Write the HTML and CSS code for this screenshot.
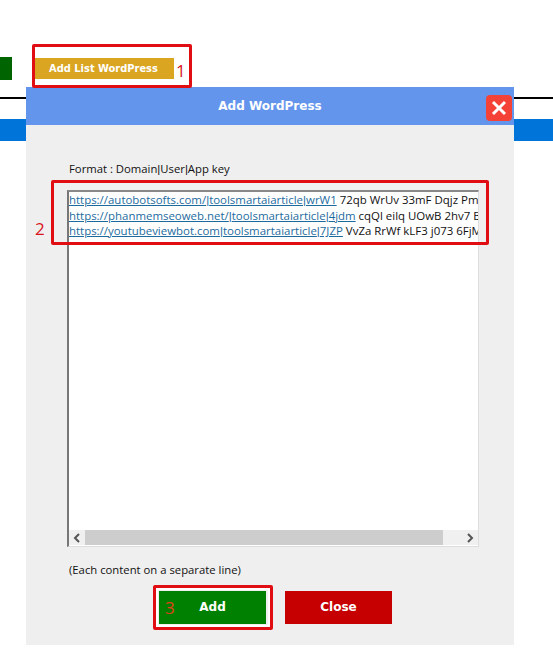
FILE: index.html
```html
<!DOCTYPE html>
<html lang="en">
<head>
<meta charset="utf-8">
<title>Add WordPress</title>
<link rel="stylesheet" href="styles.css">
</head>
<body>
<div class="page">
  <div class="toolbar">
    <span class="green-chip"></span>
    <button class="gold-btn">Add List WordPress</button>
  </div>
  <div class="rule"></div>
  <div class="blue-bar"></div>

  <div class="modal">
    <div class="modal-head">
      <span class="modal-title">Add WordPress</span>
      <span class="close-x">
        <svg width="16" height="16" viewBox="0 0 16 16"><path d="M2 2 L14 14 M14 2 L2 14" stroke="#fff" stroke-width="3" fill="none"/></svg>
      </span>
    </div>
    <div class="modal-body">
      <div class="format">Format : Domain<span class="pipe">|</span>User<span class="pipe">|</span>App key</div>
      <div class="editor">
        <div class="editor-text">
          <div class="line"><a class="link">https://autobotsofts.com/<span class="pipe">|</span>toolsmartaiarticle<span class="pipe">|</span>wrW1</a> 72qb WrUv 33mF Dqjz PmTx</div>
          <div class="line"><a class="link">https://phanmemseoweb.net/<span class="pipe">|</span>toolsmartaiarticle<span class="pipe">|</span>4jdm</a> cqQl eilq UOwB 2hv7 Bk9s</div>
          <div class="line"><a class="link">https://youtubeviewbot.com<span class="pipe">|</span>toolsmartaiarticle<span class="pipe">|</span>7JZP</a> VvZa RrWf kLF3 j073 6FjM</div>
        </div>
        <div class="hscroll">
          <span class="arrow">
            <svg width="8" height="10" viewBox="0 0 8 10"><path d="M6 1 L2 5 L6 9" stroke="#555" stroke-width="2" fill="none"/></svg>
          </span>
          <span class="thumb"></span>
          <span class="arrow arrow-right">
            <svg width="8" height="10" viewBox="0 0 8 10"><path d="M2 1 L6 5 L2 9" stroke="#555" stroke-width="2" fill="none"/></svg>
          </span>
        </div>
      </div>
      <div class="note">(Each content on a separate line)</div>
      <div class="actions">
        <button class="btn btn-add">Add</button>
        <button class="btn btn-close">Close</button>
      </div>
    </div>
  </div>

  <div class="mark mark-1"></div>
  <span class="mark-num num-1">1</span>
  <div class="mark mark-2"></div>
  <span class="mark-num num-2">2</span>
  <div class="mark mark-3"></div>
  <span class="mark-num num-3">3</span>
</div>
</body>
</html>
```

FILE: styles.css
```css
* { box-sizing: border-box; }
html, body { margin: 0; padding: 0; background: #fff; }
.page {
  position: relative;
  width: 553px;
  height: 654px;
  overflow: hidden;
  font-family: "Open Sans", "Noto Sans", sans-serif;
}
.toolbar {
  display: flex;
  align-items: flex-start;
  gap: 23px;
  padding-top: 57px;
  height: 97px;
}
.green-chip { width: 12px; height: 23px; background: #006400; }
.gold-btn {
  width: 139px;
  height: 21px;
  margin-top: 1px;
  padding: 0 2px 0 0;
  border: 0;
  background: #daa520;
  color: #fff;
  font: bold 9.9px "DejaVu Sans", sans-serif;
}
.rule { height: 2px; background: #000; }
.blue-bar { height: 22px; margin-top: 20px; background: #0074d9; }

.modal {
  position: absolute;
  left: 26px;
  top: 87px;
  width: 488px;
  height: 558px;
  background: #efefef;
  display: flex;
  flex-direction: column;
}
.modal-head {
  height: 38px;
  background: #6495ed;
  display: flex;
  align-items: center;
  justify-content: center;
  position: relative;
}
.modal-title { color: #fff; font: bold 12px "DejaVu Sans", sans-serif; }
.close-x {
  position: absolute;
  left: 460px;
  top: 8px;
  width: 26px;
  height: 26px;
  border-radius: 4px;
  background: #f44336;
  display: flex;
  align-items: center;
  justify-content: center;
}
.modal-body {
  flex: 1;
  padding: 36px 35px 0 41px;
  display: flex;
  flex-direction: column;
}
.pipe { font-family: "Liberation Sans", sans-serif; line-height: 1; }
.format { font-size: 11.3px; line-height: 16px; color: #111; margin-left: 2px; }
.editor {
  margin-top: 13px;
  height: 357px;
  background: #fff;
  border-top: 2px solid #888;
  border-left: 2px solid #777;
  border-right: 1px solid #ddd;
  border-bottom: 1px solid #ddd;
  display: flex;
  flex-direction: column;
}
.editor-text { flex: 1; overflow: hidden; }
.line {
  height: 15.5px;
  white-space: nowrap;
  overflow: hidden;
  font-size: 11.45px;
  line-height: 15.5px;
  color: #111;
}
.link { color: #1d6b9e; text-decoration: underline; }
.hscroll { height: 15px; margin-bottom: 1px; display: flex; background: #f0f0f0; }
.arrow { width: 16px; display: flex; align-items: center; justify-content: center; }
.arrow-right { width: 35px; padding-left: 18px; }
.thumb { flex: 1; background: #cdcdcd; }

.note { margin-top: 15px; margin-left: 2px; font-size: 11.3px; line-height: 16px; color: #111; }
.actions { display: flex; gap: 19px; margin-top: 13px; margin-left: 92px; }
.btn {
  height: 33px;
  border: 0;
  padding: 0 0 2px;
  color: #fff;
  font: bold 12px "DejaVu Sans", sans-serif;
}
.btn-add { width: 107px; background: #008000; }
.btn-close { width: 107px; background: #c60000; }

.mark { position: absolute; border: 3px solid #e00d12; border-radius: 2px; }
.mark-1 { left: 32px; top: 44px; width: 160px; height: 44px; }
.mark-2 { left: 51px; top: 180px; width: 438px; height: 65px; }
.mark-3 { left: 153px; top: 585px; width: 120px; height: 45px; box-shadow: inset 0 0 0 2px #fff; }
.mark-num { position: absolute; font-family: "Open Sans", sans-serif; font-size: 17px; line-height: 20px; color: #d8141c; }
.num-1 { left: 176px; top: 61px; }
.num-2 { left: 35px; top: 219px; }
.num-3 { left: 165px; top: 598px; color: #e0401a; }
```
